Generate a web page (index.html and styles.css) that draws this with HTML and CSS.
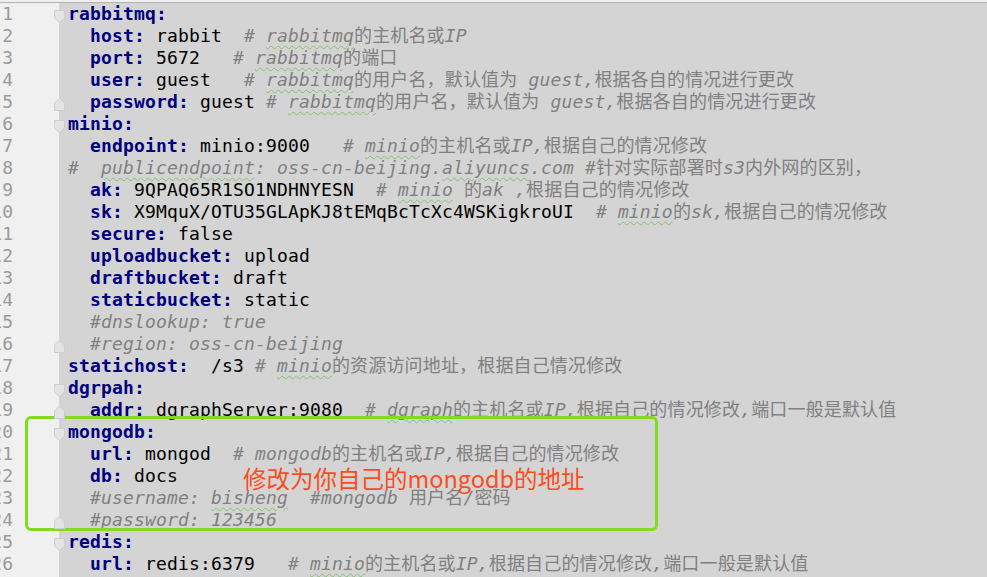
FILE: index.html
```html
<!DOCTYPE html>
<html lang="zh">
<head>
<meta charset="utf-8">
<title>application.yml</title>
<link rel="stylesheet" href="styles.css">
</head>
<body>
<div class="editor">
  <div class="nums">
    <div>1</div><div>2</div><div>3</div><div>4</div><div>5</div><div>6</div><div>7</div><div>8</div><div>9</div><div>10</div><div>11</div><div>12</div><div>13</div><div>14</div><div>15</div><div>16</div><div>17</div><div>18</div><div>19</div><div>20</div><div>21</div><div>22</div><div>23</div><div>24</div><div>25</div><div>26</div>
  </div>
  <div class="folds">
    <div class="fc"><svg class="mk" width="11" height="13" viewBox="0 0 11 13"><path d="M0.5 0.5H10.5V8L5.5 12.5L0.5 8Z"/></svg></div>
    <div class="fc"></div>
    <div class="fc"></div>
    <div class="fc"></div>
    <div class="fc"><svg class="mk" width="11" height="13" viewBox="0 0 11 13"><path d="M0.5 12.5H10.5V5L5.5 0.5L0.5 5Z"/></svg></div>
    <div class="fc"><svg class="mk" width="11" height="13" viewBox="0 0 11 13"><path d="M0.5 0.5H10.5V8L5.5 12.5L0.5 8Z"/></svg></div>
    <div class="fc"></div>
    <div class="fc"></div>
    <div class="fc"></div>
    <div class="fc"></div>
    <div class="fc"></div>
    <div class="fc"></div>
    <div class="fc"></div>
    <div class="fc"></div>
    <div class="fc"></div>
    <div class="fc"><svg class="mk" width="11" height="13" viewBox="0 0 11 13"><path d="M0.5 12.5H10.5V5L5.5 0.5L0.5 5Z"/></svg></div>
    <div class="fc"></div>
    <div class="fc"><svg class="mk" width="11" height="13" viewBox="0 0 11 13"><path d="M0.5 0.5H10.5V8L5.5 12.5L0.5 8Z"/></svg></div>
    <div class="fc"><svg class="mk" width="11" height="13" viewBox="0 0 11 13"><path d="M0.5 12.5H10.5V5L5.5 0.5L0.5 5Z"/></svg></div>
    <div class="fc"><svg class="mk" width="11" height="13" viewBox="0 0 11 13"><path d="M0.5 0.5H10.5V8L5.5 12.5L0.5 8Z"/></svg></div>
    <div class="fc"></div>
    <div class="fc"></div>
    <div class="fc"></div>
    <div class="fc"><svg class="mk" width="11" height="13" viewBox="0 0 11 13"><path d="M0.5 12.5H10.5V5L5.5 0.5L0.5 5Z"/></svg></div>
    <div class="fc"><svg class="mk" width="11" height="13" viewBox="0 0 11 13"><path d="M0.5 0.5H10.5V8L5.5 12.5L0.5 8Z"/></svg></div>
    <div class="fc"></div>
  </div>
  <div class="code">
<div class="ln"><span class="k">rabbitmq:</span></div>
<div class="ln">  <span class="k">host:</span> rabbit  <span class="c"># <span class="sp">rabbitmq</span>的主机名或IP</span></div>
<div class="ln">  <span class="k">port:</span> 5672   <span class="c"># <span class="sp">rabbitmq</span>的端口</span></div>
<div class="ln">  <span class="k">user:</span> guest   <span class="c"># <span class="sp">rabbitmq</span>的用户名，默认值为 guest,根据各自的情况进行更改</span></div>
<div class="ln">  <span class="k">password:</span> guest <span class="c"># <span class="sp">rabbitmq</span>的用户名，默认值为 guest,根据各自的情况进行更改</span></div>
<div class="ln"><span class="k">minio:</span></div>
<div class="ln">  <span class="k">endpoint:</span> minio:9000   <span class="c"># <span class="sp">minio</span>的主机名或IP,根据自己的情况修改</span></div>
<div class="ln"><span class="c">#  <span class="sp">publicendpoint</span>: oss-cn-beijing.<span class="sp">aliyuncs</span>.com #针对实际部署时s3内外网的区别，</span></div>
<div class="ln">  <span class="k">ak:</span> 9QPAQ65R1SO1NDHNYESN  <span class="c"># <span class="sp">minio</span> 的ak ,根据自己的情况修改</span></div>
<div class="ln">  <span class="k">sk:</span> X9MquX/OTU35GLApKJ8tEMqBcTcXc4WSKigkroUI  <span class="c"># <span class="sp">minio</span>的sk,根据自己的情况修改</span></div>
<div class="ln">  <span class="k">secure:</span> false</div>
<div class="ln">  <span class="k">uploadbucket:</span> upload</div>
<div class="ln">  <span class="k">draftbucket:</span> draft</div>
<div class="ln">  <span class="k">staticbucket:</span> static</div>
<div class="ln">  <span class="c">#dnslookup: true</span></div>
<div class="ln">  <span class="c">#region: oss-cn-beijing</span></div>
<div class="ln"><span class="k">statichost:</span>  /s3 <span class="c"># <span class="sp">minio</span>的资源访问地址，根据自己情况修改</span></div>
<div class="ln"><span class="k">dgrpah:</span></div>
<div class="ln">  <span class="k">addr:</span> dgraphServer:9080  <span class="c"># <span class="sp">dgraph</span>的主机名或IP,根据自己的情况修改,端口一般是默认值</span></div>
<div class="ln"><span class="k">mongodb:</span></div>
<div class="ln">  <span class="k">url:</span> mongod  <span class="c"># mongodb的主机名或IP,根据自己的情况修改</span></div>
<div class="ln">  <span class="k">db:</span> docs</div>
<div class="ln">  <span class="c">#username: <span class="sp">bisheng</span>  #mongodb 用户名/密码</span></div>
<div class="ln">  <span class="c">#password: 123456</span></div>
<div class="ln"><span class="k">redis:</span></div>
<div class="ln">  <span class="k">url:</span> redis:6379   <span class="c"># <span class="sp">minio</span>的主机名或IP,根据自己的情况修改,端口一般是默认值</span></div>
  </div>
</div>
<div class="note-box"></div>
<div class="note-text">修改为你自己的mongodb的地址</div>
</body>
</html>
```
FILE: styles.css
```css
html, body {
  margin: 0;
  padding: 0;
}
body {
  width: 987px;
  height: 577px;
  overflow: hidden;
  background: #f0f0f0;
  position: relative;
}
.editor {
  margin-top: 2px;
  border-top: 1px solid #b2b2b2;
  height: 574px;
  display: flex;
  font-family: "DejaVu Sans Mono", "Noto Sans CJK SC", monospace;
  font-size: 18px;
  line-height: 22px;
}
.nums {
  width: 24px;
  margin-left: -11px;
  flex: none;
  text-align: right;
  color: #9a9a9a;
  background: #f0f0f0;
}
.nums div {
  height: 22px;
}
.folds {
  width: 46px;
  flex: none;
  background: #f0f0f0;
}
.fc {
  height: 22px;
  display: flex;
  justify-content: flex-end;
  align-items: flex-start;
}
.mk {
  display: block;
  margin-top: 7px;
  margin-right: -6px;
  position: relative;
  z-index: 1;
}
.mk path {
  fill: #e4e4e4;
  stroke: #cdcdcd;
  stroke-width: 1;
}
.code {
  flex: 1;
  background: #d4d4d4;
  padding-left: 9px;
  color: #000000;
  letter-spacing: 0.16px;
}
.ln {
  height: 22px;
  white-space: pre;
}
.k {
  color: #000080;
  font-weight: bold;
}
.c {
  color: #808080;
  font-style: italic;
  font-synthesis: none;
}
.sp {
  text-decoration: underline wavy #86c26a;
  text-decoration-thickness: 1px;
  text-underline-offset: 3px;
}
.note-box {
  position: absolute;
  left: 25px;
  top: 416px;
  width: 627px;
  height: 109px;
  border: 3px solid #7fdc1e;
  border-radius: 6px;
}
.note-text {
  position: absolute;
  left: 243px;
  top: 465px;
  font-family: "Noto Sans CJK SC", "Noto Sans", sans-serif;
  font-size: 23.5px;
  line-height: 26px;
  color: #fc4c1c;
  white-space: nowrap;
}
```
